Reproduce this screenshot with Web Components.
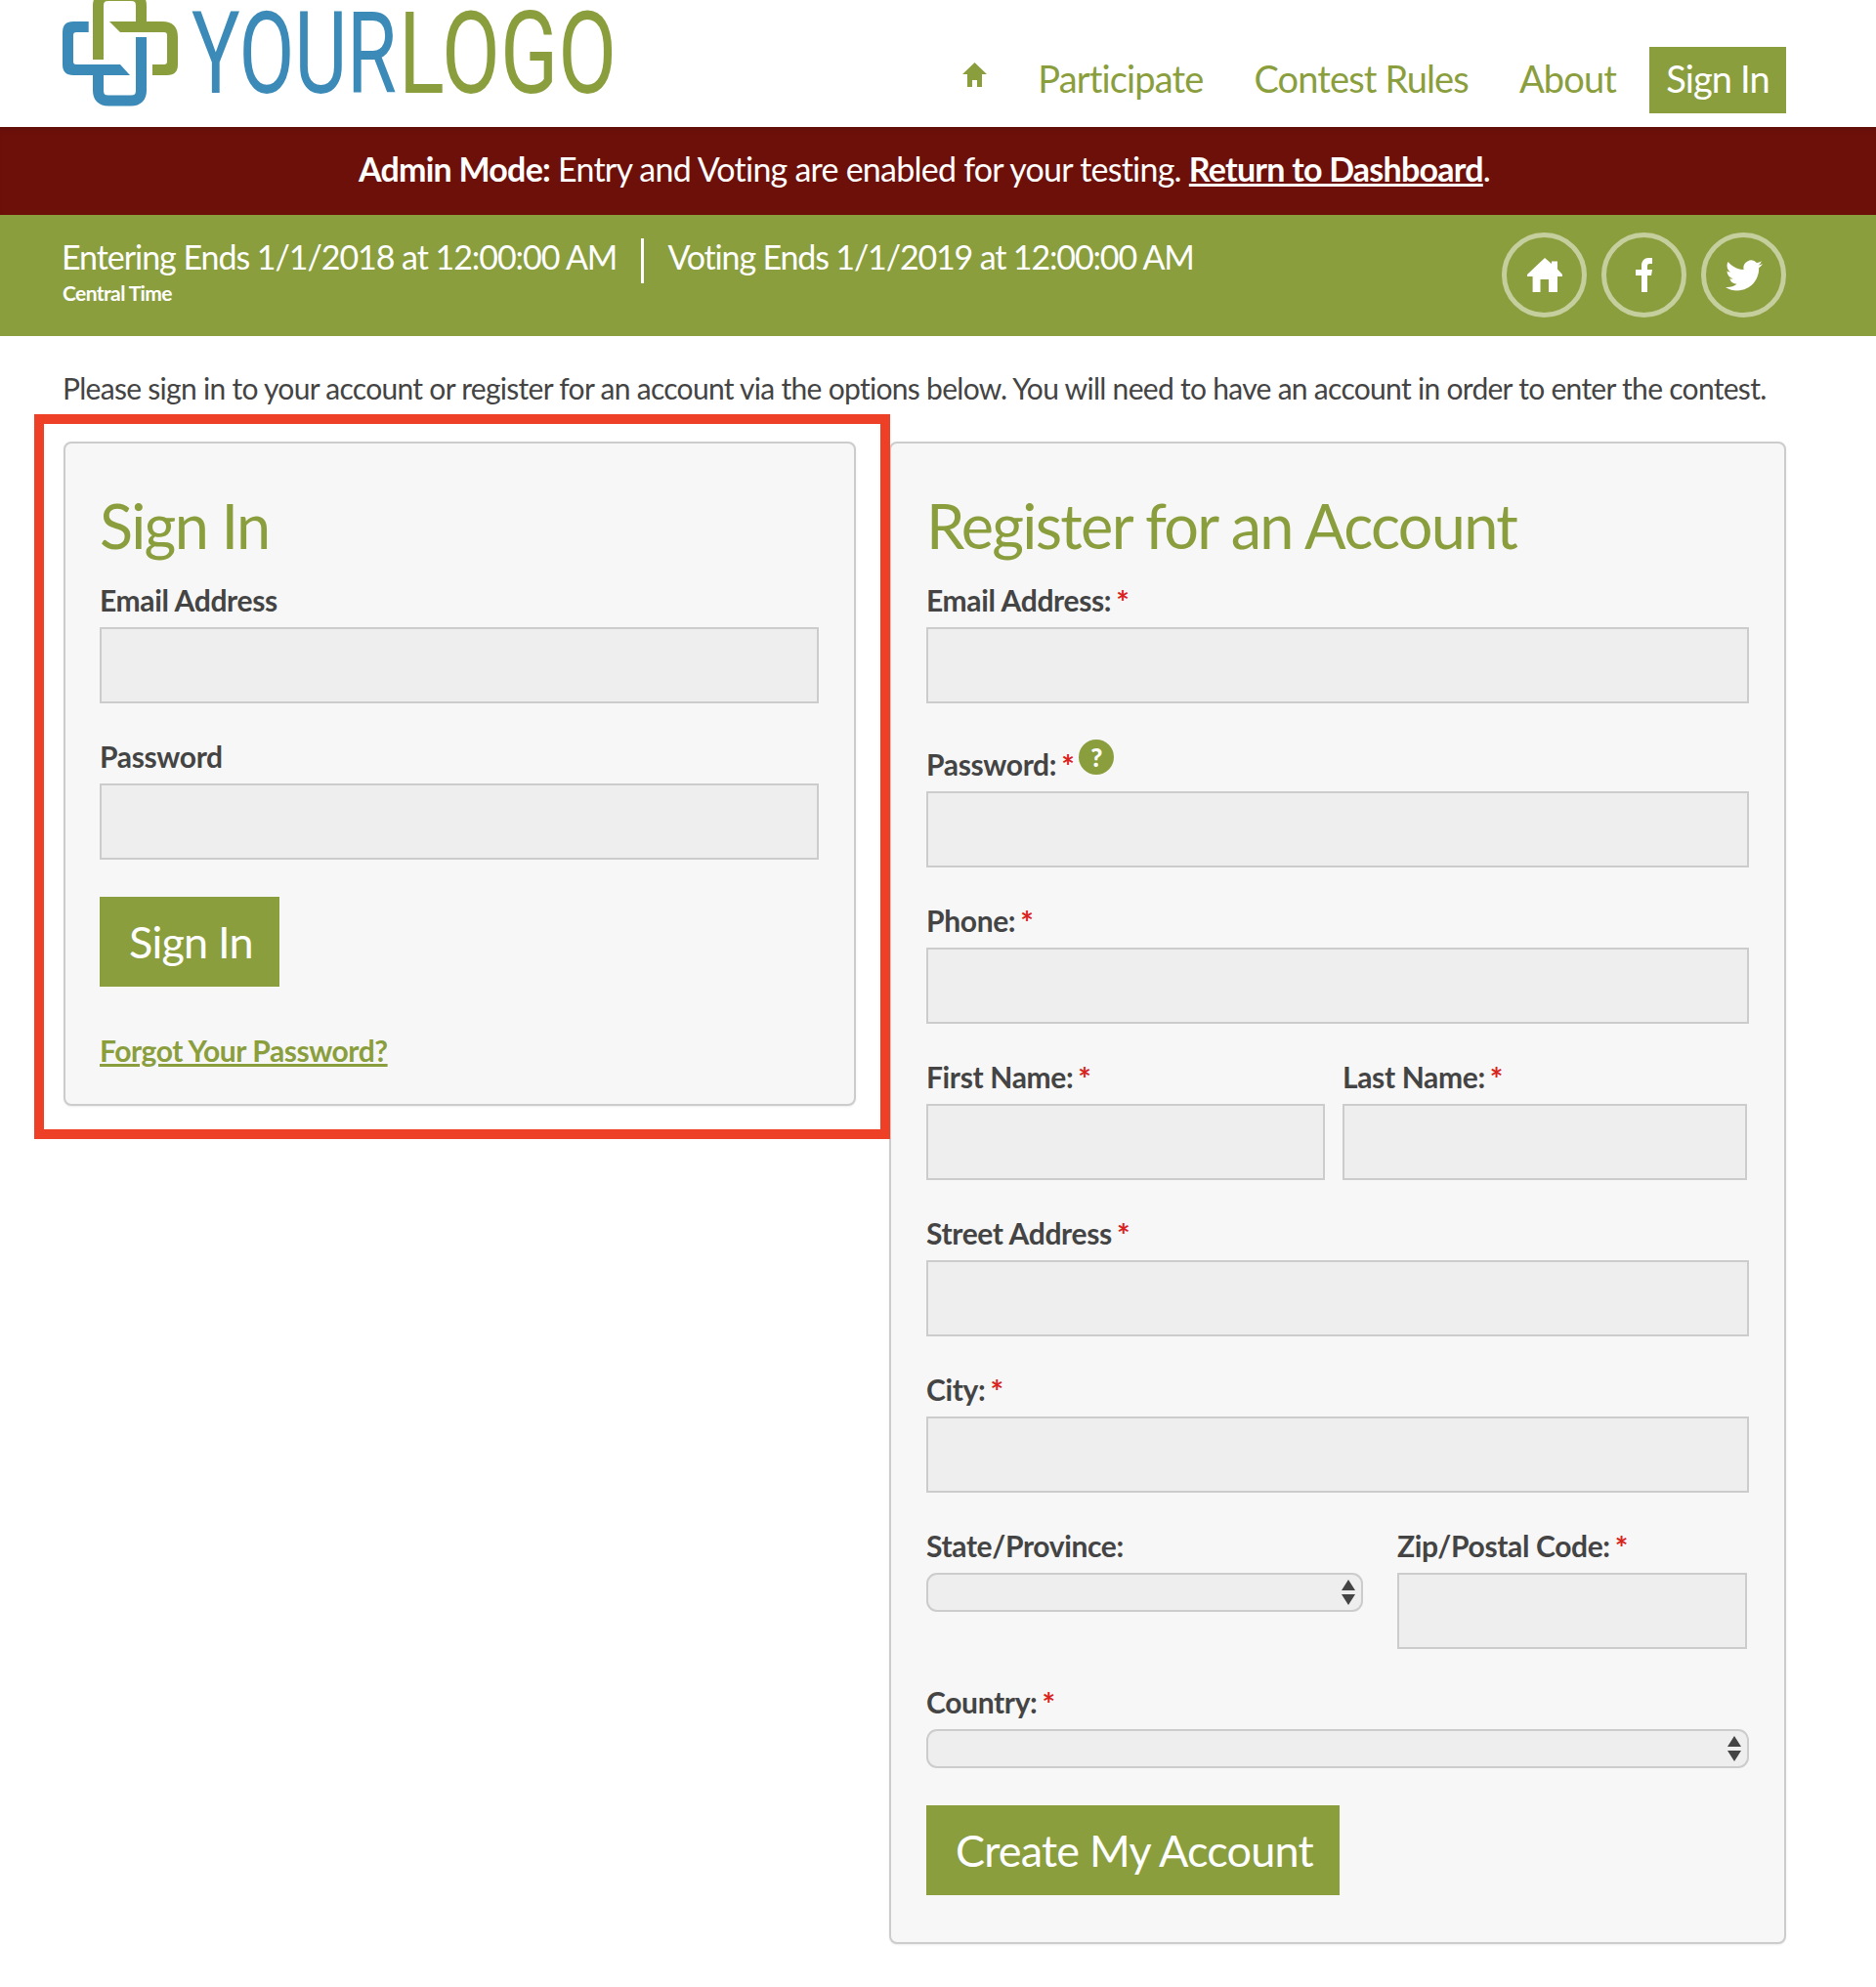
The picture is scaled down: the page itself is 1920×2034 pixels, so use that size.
<!DOCTYPE html>
<html lang="en">
<head>
<meta charset="utf-8">
<title>Sign In</title>
<style>
html,body{margin:0;padding:0;background:#fff;}
body{font-family:"Lato","Liberation Sans",sans-serif;color:#444;--green:#8a9e3d;}
</style>
</head>
<body>
<contest-header></contest-header>
<admin-bar></admin-bar>
<dates-bar></dates-bar>
<sign-page></sign-page>
<script>
// house, facebook and twitter shapes used in the bars
const ICON_HOUSE_SOCIAL='M18 0L25 6V3.5H31V11.5L36 17V19H31V35H22V22H13.5V35H5.6V19H0V17Z';
const ICON_FACEBOOK='M6 35V18H0V12H6V8C6 3 9 0 13 0H17V6H14C12.5 6 12 7 12 8.5V12H17L16 18H12V35Z';
const ICON_TWITTER='M23.953 4.57a10 10 0 01-2.825.775 4.958 4.958 0 002.163-2.723c-.951.555-2.005.959-3.127 1.184a4.92 4.92 0 00-8.384 4.482C7.69 8.095 4.067 6.13 1.64 3.162a4.822 4.822 0 00-.666 2.475c0 1.71.87 3.213 2.188 4.096a4.904 4.904 0 01-2.228-.616v.06a4.923 4.923 0 003.946 4.827 4.996 4.996 0 01-2.212.085 4.936 4.936 0 004.604 3.417 9.867 9.867 0 01-6.102 2.105c-.39 0-.779-.023-1.17-.067a13.995 13.995 0 007.557 2.209c9.053 0 13.998-7.496 13.998-13.985 0-.21 0-.42-.015-.63A9.935 9.935 0 0024 4.59z';

class ContestHeader extends HTMLElement {
    connectedCallback(){
        this.attachShadow({mode:'open'});
        this.shadowRoot.innerHTML = `
        <style>
            :host{display:flex;height:130px;padding:0 92px 0 64px;justify-content:space-between;box-sizing:border-box;overflow:hidden;}
            svg.logo{display:block;width:570px;height:130px;flex:none;}
            nav{display:flex;align-items:center;height:68px;margin-top:48px;font-size:38px;letter-spacing:-0.85px;color:var(--green);}
            nav a{color:inherit;text-decoration:none;margin-left:52px;padding-bottom:5px;}
            nav svg{display:block;width:25px;height:25px;margin-bottom:12px;}
            nav a.signin{margin-left:34px;padding-bottom:0;background:var(--green);color:#fff;height:68px;line-height:64px;width:140px;text-align:center;letter-spacing:-0.9px;}
        </style>
        <svg class="logo" viewBox="64 0 570 130">
            <g fill="#8a9e3d">
                <path d="M100.5 61V6Q100.5-4.5 111-4.5H134Q144.5-4.5 144.5 6V27" fill="none" stroke="#8a9e3d" stroke-width="11"/>
                <path d="M112 22H166Q182 22 182 38V66Q182 77 171 77H156V66H168Q171 66 171 63V36Q171 33 168 33H123Z"/>
            </g>
            <g fill="#3b8ab8">
                <path d="M90.7 22H75Q64 22 64 33V66Q64 77 75 77H133L123 66H78Q75 66 75 63V36Q75 33 78 33H90.7Z"/>
                <path d="M144.5 38V92.5Q144.5 103 134 103H111Q100.5 103 100.5 92.5V77" fill="none" stroke="#3b8ab8" stroke-width="11"/>
            </g>
            <g font-family="Roboto" font-weight="450" font-size="117">
                <text data-x="196" data-w="210" fill="#3b8ab8">YOUR</text>
                <text data-x="408" data-w="223" fill="#8a9e3d">LOGO</text>
            </g>
        </svg>
        <nav>
            <svg viewBox="0 0 25 25" fill="#8a9e3d"><path d="M12.5 0L25 12H20V25H15V18H10V25H5V12H0Z"/></svg>
            <a href="#">Participate</a>
            <a href="#">Contest Rules</a>
            <a href="#">About</a>
            <a class="signin" href="#">Sign In</a>
        </nav>
        `
        // squeeze the logo words to the width of the wordmark
        this.shadowRoot.querySelectorAll('text').forEach(t => {
            let sx=Number(t.dataset.w)/t.getComputedTextLength();
            t.setAttribute('transform',`translate(${t.dataset.x} 95) scale(${sx} 1)`);
        })
    }
}
customElements.define("contest-header", ContestHeader);

class AdminBar extends HTMLElement {
    connectedCallback(){
        this.attachShadow({mode:'open'});
        this.shadowRoot.innerHTML = `
        <style>
            :host{display:block;box-sizing:border-box;height:90px;padding-right:28px;line-height:86px;background:#6e100a;color:#fff;text-align:center;font-size:34px;letter-spacing:-0.76px;box-shadow:inset 0 6px 6px -4px rgba(0,0,0,.15);}
            b{font-weight:700;}
            a{color:inherit;font-weight:700;}
        </style>
        <b>Admin Mode:</b> Entry and Voting are enabled for your testing. <a href="#">Return to Dashboard</a>.
        `
    }
}
customElements.define("admin-bar", AdminBar);

class SocialLink extends HTMLElement {
    connectedCallback(){
        let path=this.getAttribute('path') ?? '';
        let box=this.getAttribute('box') ?? '0 0 36 36';
        let w=this.getAttribute('w') ?? '36';
        let h=this.getAttribute('h') ?? '36';
        this.attachShadow({mode:'open'});
        this.shadowRoot.innerHTML = `
        <style>
            :host{display:flex;width:87px;height:87px;box-sizing:border-box;border:5.5px solid rgba(255,255,255,.5);border-radius:50%;align-items:center;justify-content:center;}
            svg{display:block;width:${w}px;height:${h}px;fill:#fff;}
        </style>
        <svg viewBox="${box}"><path d="${path}"/></svg>
        `
    }
}
customElements.define("social-link", SocialLink);

class DatesBar extends HTMLElement {
    connectedCallback(){
        this.attachShadow({mode:'open'});
        this.shadowRoot.innerHTML = `
        <style>
            :host{display:flex;height:124px;background:var(--green);color:#fff;padding:0 92px 0 63px;box-sizing:border-box;justify-content:space-between;}
            .dates{display:flex;gap:25px;padding-top:23px;font-size:34px;line-height:40px;letter-spacing:-1.05px;}
            small{display:block;margin-top:5px;font-size:21px;line-height:24px;font-weight:700;letter-spacing:-0.6px;margin-left:1px;}
            .sep{width:3px;height:46px;margin:1px -1px 0 0;background:#fff;}
            .voting{letter-spacing:-1.15px;}
            .social{display:flex;gap:15px;padding-top:18px;}
        </style>
        <div class="dates">
            <div>Entering Ends 1/1/2018 at 12:00:00 AM<small>Central Time</small></div>
            <div class="sep"></div>
            <div class="voting">Voting Ends 1/1/2019 at 12:00:00 AM</div>
        </div>
        <div class="social">
            <social-link path="${ICON_HOUSE_SOCIAL}"></social-link>
            <social-link path="${ICON_FACEBOOK}" box="0 0 17 35" w="17" h="35"></social-link>
            <social-link path="${ICON_TWITTER}" box="0 0 24 24" w="38" h="38"></social-link>
        </div>
        `
    }
}
customElements.define("dates-bar", DatesBar);

class FormCard extends HTMLElement {
    connectedCallback(){
        let title=this.getAttribute('title') ?? '';
        this.attachShadow({mode:'open'});
        this.shadowRoot.innerHTML = `
        <style>
            :host{display:block;box-sizing:border-box;background:#f7f7f7;border:2px solid #ccc;border-radius:8px;padding:34px 36px 0 var(--pad-left,35px);box-shadow:0 1px 2px rgba(0,0,0,.08);}
            h2{margin:0 0 6px;font-size:63px;line-height:99px;font-weight:400;letter-spacing:-1.7px;color:var(--green);}
        </style>
        <h2>${title}</h2>
        <slot></slot>
        `
    }
}
customElements.define("form-card", FormCard);

class FormField extends HTMLElement {
    connectedCallback(){
        let label=this.getAttribute('label') ?? '';
        let required=this.hasAttribute('required');
        let help=this.hasAttribute('help');
        let select=this.hasAttribute('select');
        let control=select
            ? `<div class="sel"><select></select><svg viewBox="0 0 14 26" fill="#444"><path d="M7 0L14 11H0ZM0 15H14L7 26Z"/></svg></div>`
            : `<input type="text">`;
        this.attachShadow({mode:'open'});
        this.shadowRoot.innerHTML = `
        <style>
            :host{display:block;margin-bottom:33px;}
            label{display:block;box-sizing:border-box;height:42px;margin-bottom:7px;font-size:30px;line-height:42px;font-weight:700;letter-spacing:-0.35px;white-space:nowrap;}
            :host([help]) label{height:50px;padding-top:8px;}
            .req{color:#d9221c;font-size:32px;line-height:0;margin-left:5px;vertical-align:-3px;}
            .help{display:inline-block;position:relative;top:-10px;width:36px;height:36px;line-height:36px;margin-left:-2px;border-radius:50%;background:var(--green);color:#fff;font-size:26px;font-weight:900;text-align:center;letter-spacing:0;vertical-align:-1px;}
            input{display:block;box-sizing:border-box;width:100%;height:78px;margin:0;padding:0 10px;background:#eee;border:2px solid #ccc;border-radius:0;outline:0;}
            .sel{position:relative;}
            select{display:block;box-sizing:border-box;width:100%;height:40px;margin:0;background:#eee;border:2px solid #ccc;border-radius:11px;appearance:none;outline:0;}
            .sel svg{position:absolute;right:8px;top:7px;width:14px;height:26px;}
        </style>
        <label>${label}${required ? '<span class="req">*</span>' : ''}${help ? ' <span class="help">?</span>' : ''}</label>
        ${control}
        `
    }
}
customElements.define("form-field", FormField);

class ActionButton extends HTMLElement {
    connectedCallback(){
        this.attachShadow({mode:'open'});
        this.shadowRoot.innerHTML = `
        <style>
            :host{display:block;}
            a{display:inline-block;height:92px;line-height:92px;padding:0 27px 0 30px;background:var(--green);color:#fff;font-size:45px;letter-spacing:-0.8px;text-decoration:none;}
        </style>
        <a href="#"><slot></slot></a>
        `
    }
}
customElements.define("action-button", ActionButton);

class SignPage extends HTMLElement {
    connectedCallback(){
        this.attachShadow({mode:'open'});
        this.shadowRoot.innerHTML = `
        <style>
            :host{display:block;padding:0 92px 45px 65px;}
            p{margin:0 0 0 -1px;height:108px;box-sizing:border-box;padding-top:32px;font-size:30px;line-height:42px;letter-spacing:-0.705px;white-space:nowrap;}
            .cols{display:grid;grid-template-columns:811px 918px;gap:34px;align-items:start;}
            .left{position:relative;}
            .mark{position:absolute;left:-30px;right:-35px;top:-28px;bottom:-34px;border:10px solid #ee4027;pointer-events:none;}
            .forgot{display:block;margin-top:47px;height:73px;font-size:30px;font-weight:700;line-height:36px;letter-spacing:-0.45px;color:var(--green);}
            .pair{display:grid;gap:18px;grid-template-columns:408px 414px;}
            .pair.zip{gap:35px;grid-template-columns:447px 358px;}
            #create{padding-bottom:48px;margin-top:38px;}
            #login{margin-top:38px;}
            #register{--pad-left:36px;}
            form-field.last{margin-bottom:0;}
        </style>
        <p>Please sign in to your account or register for an account via the options below. You will need to have an account in order to enter the contest.</p>
        <div class="cols">
            <div class="left">
                <form-card title="Sign In">
                    <form-field label="Email Address"></form-field>
                    <form-field class="last" label="Password"></form-field>
                    <action-button id="login">Sign In</action-button>
                    <a class="forgot" href="#">Forgot Your Password?</a>
                </form-card>
                <div class="mark"></div>
            </div>
            <form-card id="register" title="Register for an Account">
                <form-field label="Email Address:" required></form-field>
                <form-field label="Password:" required help></form-field>
                <form-field label="Phone:" required></form-field>
                <div class="pair">
                    <form-field label="First Name:" required></form-field>
                    <form-field label="Last Name:" required></form-field>
                </div>
                <form-field label="Street Address" required></form-field>
                <form-field label="City:" required></form-field>
                <div class="pair zip">
                    <form-field label="State/Province:" select></form-field>
                    <form-field label="Zip/Postal Code:" required></form-field>
                </div>
                <form-field class="last" label="Country:" required select></form-field>
                <action-button id="create">Create My Account</action-button>
            </form-card>
        </div>
        `
    }
}
customElements.define("sign-page", SignPage);
</script>
</body>
</html>
